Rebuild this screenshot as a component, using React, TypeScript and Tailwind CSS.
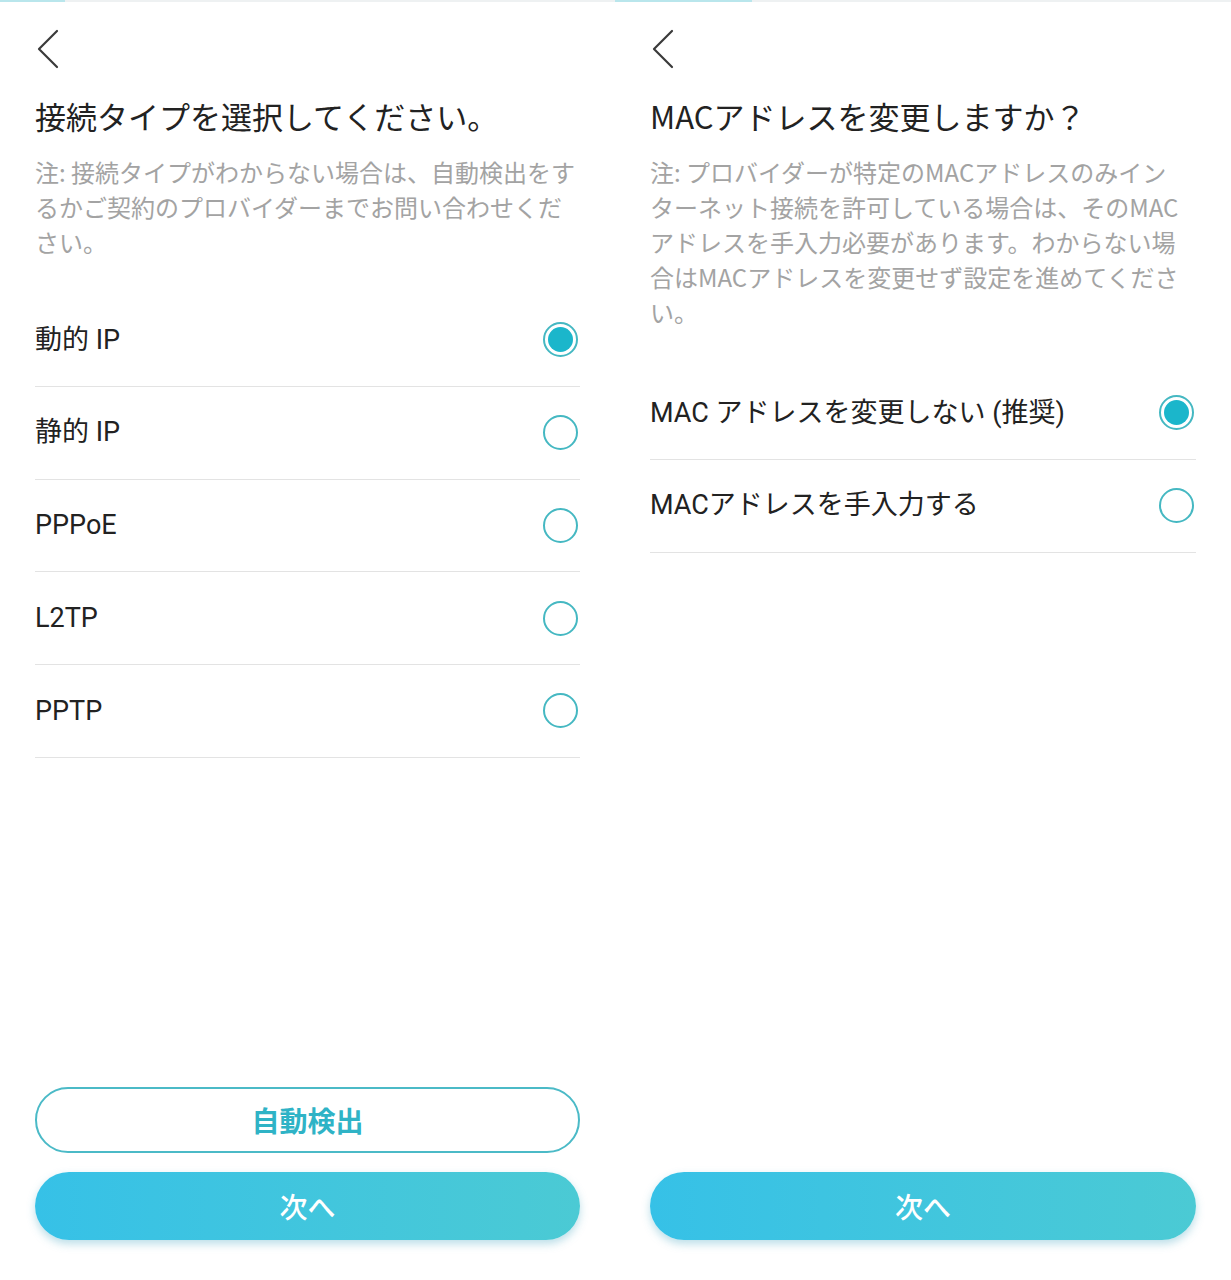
import React from 'react';

const CJK = '"Noto Sans CJK JP", "Noto Sans", sans-serif';
const ROW = 'Roboto, "Noto Sans CJK JP", sans-serif';

function BackIcon() {
  return (
    <svg width="24" height="40" viewBox="0 0 24 40" className="block">
      <path d="M21 2 L3 20 L21 38" fill="none" stroke="#3a3a3a" strokeWidth="2.2" strokeLinecap="round" strokeLinejoin="round" />
    </svg>
  );
}

function Radio({ checked }: { checked: boolean }) {
  return (
    <span className="flex h-[35px] w-[35px] items-center justify-center rounded-full border-2 border-[#45b8c2] bg-white">
      {checked && <span className="h-[25px] w-[25px] rounded-full bg-[#1bb6cb]" />}
    </span>
  );
}

function OptionRow({ label, checked }: { label: string; checked: boolean }) {
  return (
    <div className="flex h-[92.75px] items-center justify-between border-b border-[#e3e3e3]">
      <span className="text-[27px] text-[#222]" style={{ fontFamily: ROW }}>
        {label}
      </span>
      <span className="mr-[2px]">
        <Radio checked={checked} />
      </span>
    </div>
  );
}

function TopBar({ fill }: { fill: string }) {
  return (
    <div className="h-[2px] w-full bg-[#eef1f2]">
      <div className={`h-full bg-[#b9e6ec] ${fill}`} />
    </div>
  );
}

function NextButton() {
  return (
    <button
      type="button"
      className="h-[68px] w-full rounded-full bg-gradient-to-r from-[#36c1e7] to-[#4bcad4] text-[28px] font-medium text-white shadow-[0_4px_8px_rgba(60,160,190,0.35)]"
      style={{ fontFamily: CJK }}
    >
      次へ
    </button>
  );
}

function Note({ lines }: { lines: string[] }) {
  return (
    <p className="mt-[18px] whitespace-nowrap text-[24px] leading-[35px] text-[#a3a3a3]">
      {lines.map((l, i) => (
        <React.Fragment key={i}>
          {l}
          {i < lines.length - 1 && <br />}
        </React.Fragment>
      ))}
    </p>
  );
}

export default function App() {
  const types = ['動的 IP', '静的 IP', 'PPPoE', 'L2TP', 'PPTP'];

  return (
    <div className="flex h-[1280px] w-[1231px] bg-white" style={{ fontFamily: CJK }}>
      {/* left: connection type */}
      <div className="flex w-[615px] flex-col">
        <TopBar fill="w-[65px]" />
        <div className="flex flex-1 flex-col px-[35px]">
          <div className="ml-[1px] mt-[27px] h-[40px]">
            <BackIcon />
          </div>
          <h1 className="mt-[27px] text-[31px] leading-[40px] text-[#222]">接続タイプを選択してください。</h1>
          <Note
            lines={[
              '注: 接続タイプがわからない場合は、自動検出をす',
              'るかご契約のプロバイダーまでお問い合わせくだ',
              'さい。',
            ]}
          />
          <div className="mt-[35px] flex flex-col">
            {types.map((t, i) => (
              <OptionRow key={t} label={t} checked={i === 0} />
            ))}
          </div>
          <div className="mt-auto mb-[40px] flex flex-col gap-[19px]">
            <button
              type="button"
              className="h-[66px] w-full rounded-full border-2 border-[#4bbac7] bg-white text-[28px] font-bold text-[#2fb3c6]"
              style={{ fontFamily: CJK }}
            >
              自動検出
            </button>
            <NextButton />
          </div>
        </div>
      </div>

      {/* right: MAC address */}
      <div className="flex w-[616px] flex-col">
        <TopBar fill="w-[137px]" />
        <div className="flex flex-1 flex-col px-[35px]">
          <div className="ml-[1px] mt-[27px] h-[40px]">
            <BackIcon />
          </div>
          <h1 className="mt-[27px] text-[31px] leading-[40px] text-[#222]">MACアドレスを変更しますか？</h1>
          <Note
            lines={[
              '注: プロバイダーが特定のMACアドレスのみイン',
              'ターネット接続を許可している場合は、そのMAC',
              'アドレスを手入力必要があります。わからない場',
              '合はMACアドレスを変更せず設定を進めてくださ',
              'い。',
            ]}
          />
          <div className="mt-[38px] flex flex-col">
            <OptionRow label="MAC アドレスを変更しない (推奨)" checked />
            <OptionRow label="MACアドレスを手入力する" checked={false} />
          </div>
          <div className="mt-auto mb-[40px]">
            <NextButton />
          </div>
        </div>
      </div>
    </div>
  );
}
